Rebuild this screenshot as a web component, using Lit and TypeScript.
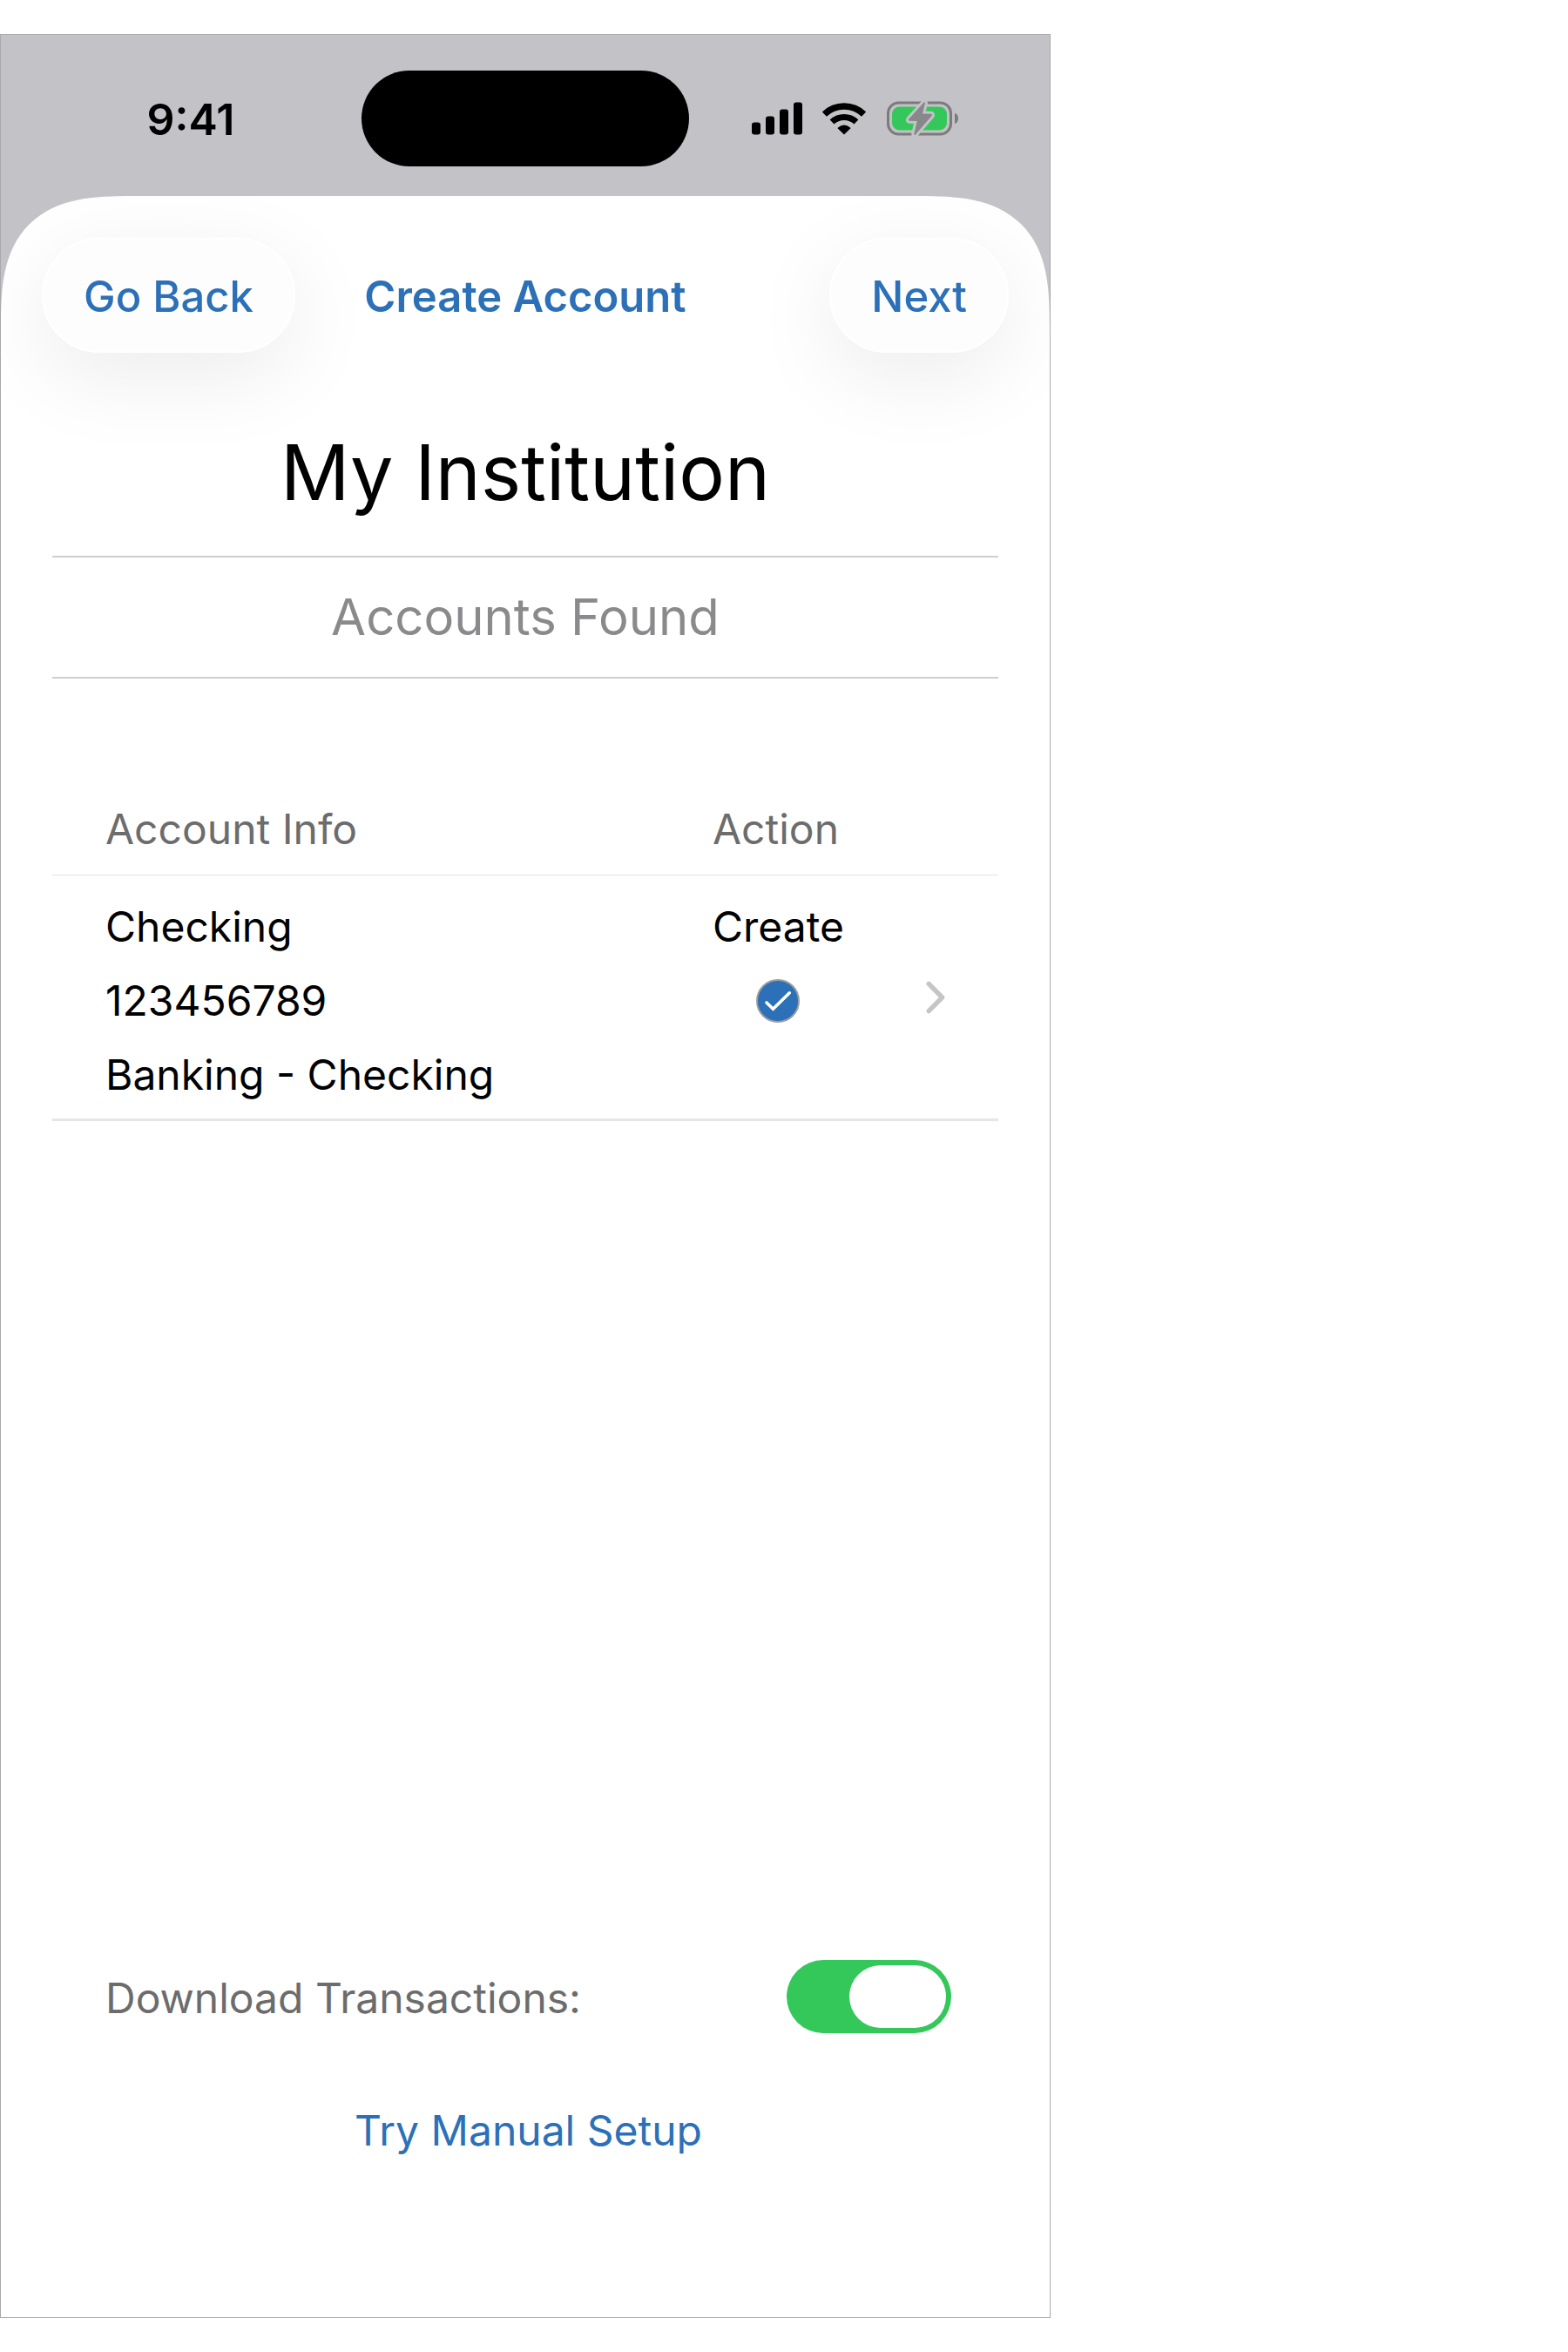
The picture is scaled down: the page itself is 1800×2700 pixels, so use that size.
import { LitElement, html, css } from "lit";
import { customElement, property, state } from "lit/decorators.js";

interface Account {
  name: string;
  number: string;
  kind: string;
  action: string;
  selected: boolean;
}

@customElement("status-bar")
class StatusBar extends LitElement {
  @property() time = "";

  static styles = css`
    :host {
      display: grid;
      grid-template-columns: 1fr minmax(0, 376px) 1fr;
      align-items: center;
      padding: 41px 0 34px;
      font-size: 50px;
      font-weight: 600;
      color: #000;
    }
    .time {
      text-align: center;
      padding: 2px 0 0 22px;
    }
    .island {
      height: 110px;
      border-radius: 55px;
      background: #000;
    }
    .icons {
      display: flex;
      align-items: center;
      justify-content: center;
      gap: 22px;
      padding-right: 32px;
    }
    svg {
      display: block;
      flex: none;
    }
  `;

  render() {
    return html`
      <span class="time">${this.time}</span>
      <span class="island"></span>
      <span class="icons">
        <svg width="58" height="38" viewBox="0 0 58 38" aria-hidden="true">
          <rect x="0" y="23.5" width="10" height="14" rx="3" />
          <rect x="16" y="16.5" width="10" height="21" rx="3" />
          <rect x="32" y="8.5" width="10" height="29" rx="3" />
          <rect x="48" y="0.5" width="10" height="37" rx="3" />
        </svg>
        <svg width="52" height="38" viewBox="0 0 52 38" aria-hidden="true">
          <path d="M3.4 14.1 A32.7 32.7 0 0 1 48.6 14.1" fill="none" stroke="#000" stroke-width="7.4" />
          <path d="M12.1 23 A20.3 20.3 0 0 1 39.9 23" fill="none" stroke="#000" stroke-width="7.2" />
          <path d="M26 37.6 L18.8 30.6 Q18.4 30 19 29.5 Q26 23.7 33 29.5 Q33.6 30 33.2 30.6 Z" />
        </svg>
        <svg width="84" height="40" viewBox="0 0 84 40" aria-hidden="true">
          <rect x="2.5" y="2" width="72" height="36" rx="12" fill="none" stroke="#7b7a7d" stroke-width="3" />
          <rect x="7" y="6.5" width="63" height="27" rx="8.5" fill="#34c85a" />
          <path d="M79 13.8 Q83 15.4 83 20 Q83 24.6 79 26.2 Z" fill="#7b7a7d" />
          <path
            d="M43.6 1.6 L26.4 20.6 Q25 22.6 27.4 22.7 L35.8 22.9 L32.2 38 Q32.4 39.6 34 38.4 L52.6 17 Q53.6 15 51.6 14.7 L42 14.4 L45 2.4 Q45 0.6 43.6 1.6 Z"
            fill="#88888b" stroke="#c3c2c7" stroke-width="6" stroke-linejoin="round" paint-order="stroke"
          />
        </svg>
      </span>
    `;
  }
}

@customElement("account-table")
class AccountTable extends LitElement {
  @property({ attribute: false }) accounts: Account[] = [];

  static styles = css`
    :host {
      display: block;
    }
    table {
      width: 100%;
      border-collapse: separate;
      border-spacing: 0;
      table-layout: fixed;
      line-height: 85px;
    }
    th,
    td {
      box-sizing: border-box;
      text-align: left;
      vertical-align: top;
      font-weight: 400;
    }
    th {
      width: 208px;
      padding: 2px 0 10px;
      color: #6c6c6c;
      border-bottom: 1px solid #e6e6e6;
    }
    td {
      padding: 16px 0 8px;
      border-bottom: 3px solid #e6e6e6;
    }
    .info {
      width: auto;
      padding-left: 61px;
    }
    .line {
      display: block;
    }
    .action {
      display: inline-grid;
      justify-items: center;
    }
    .check {
      display: grid;
      place-items: center;
      height: 85px;
    }
    .check > * {
      grid-area: 1 / 1;
    }
    .box {
      appearance: none;
      box-sizing: border-box;
      width: 50px;
      height: 50px;
      margin: 0;
      border: 2px solid #9a9da1;
      border-radius: 50%;
      background: #fff;
    }
    .box:checked {
      background: #2c70b8;
    }
    .tick {
      pointer-events: none;
    }
    .open {
      width: 120px;
      padding: 12px 61px 12px 0;
      vertical-align: middle;
    }
    .chevron {
      display: block;
      margin: 0 0 0 auto;
      padding: 0;
      border: 0;
      background: none;
      line-height: 0;
    }
  `;

  render() {
    return html`
      <table>
        <thead>
          <tr>
            <th class="info" scope="col">Account Info</th>
            <th scope="col">Action</th>
            <th class="open"></th>
          </tr>
        </thead>
        <tbody>
          ${this.accounts.map(
            (a) => html`
              <tr>
                <td class="info">
                  <span class="line">${a.name}</span>
                  <span class="line">${a.number}</span>
                  <span class="line">${a.kind}</span>
                </td>
                <td>
                  <label class="action">
                    <span>${a.action}</span>
                    <span class="check">
                      <input class="box" type="checkbox" .checked=${a.selected} />
                      <svg class="tick" width="50" height="50" viewBox="0 0 50 50" aria-hidden="true">
                        <path d="M12 27 L19.5 34.2 L38.3 15.8" fill="none" stroke="#fff" stroke-width="3.6" stroke-linecap="round" />
                      </svg>
                    </span>
                  </label>
                </td>
                <td class="open">
                  <button class="chevron" aria-label="Open ${a.name}">
                    <svg width="22" height="38" viewBox="0 0 22 38" aria-hidden="true">
                      <path d="M3.2 3.4 L18.6 19 L3.2 34.6" fill="none" stroke="#c5c5c7" stroke-width="5.4" stroke-linecap="round" stroke-linejoin="round" />
                    </svg>
                  </button>
                </td>
              </tr>
            `
          )}
        </tbody>
      </table>
    `;
  }
}

@customElement("app-root")
class AppRoot extends LitElement {
  @state() private accounts: Account[] = [
    { name: "Checking", number: "123456789", kind: "Banking - Checking", action: "Create", selected: true },
  ];
  @state() private download = true;

  static styles = css`
    :host {
      display: flex;
      flex-direction: column;
      box-sizing: border-box;
      min-height: 100vh;
      padding: 39px 0;
      background: #fff;
      color: #000;
      font-family: Inter, "Liberation Sans", sans-serif;
      font-size: 48px;
    }
    .phone {
      flex: 1;
      display: flex;
      flex-direction: column;
      box-sizing: border-box;
      width: 100%;
      max-width: 1206px;
      border: 1px solid #a9a9ab;
      background: #c3c2c7;
    }
    .sheet {
      flex: 1;
      display: flex;
      flex-direction: column;
      overflow: hidden;
      background: #fff;
      border-radius: 112px 112px 0 0;
    }
    @supports (corner-shape: superellipse(1.5)) {
      .sheet {
        border-radius: 150px 150px 0 0;
        corner-shape: superellipse(1.5) superellipse(1.5) round round;
      }
    }
    .nav {
      display: grid;
      grid-template-columns: 1fr auto 1fr;
      align-items: center;
      padding: 48px 47px 0;
      font-size: 49px;
    }
    button {
      font: inherit;
      color: #2c70b8;
      border: 0;
      background: none;
    }
    .pill {
      justify-self: start;
      height: 132px;
      padding: 2px 46px 0;
      border: 2px solid #fff;
      border-radius: 66px;
      background: #fdfdfd;
      box-shadow: 0 26px 100px rgba(0, 0, 0, 0.08);
      font-weight: 500;
    }
    .next {
      justify-self: end;
    }
    .title {
      margin: 0;
      padding-top: 2px;
      font-size: 49px;
      font-weight: 600;
      color: #2c70b8;
    }
    .body {
      padding: 81px 59px 0;
    }
    .name {
      margin: 0;
      padding-bottom: 40px;
      font-size: 88px;
      line-height: 112px;
      font-weight: 400;
      text-align: center;
      border-bottom: 2px solid #cfcfd1;
    }
    .found {
      margin: 0 0 128px;
      font-size: 58px;
      line-height: 137px;
      font-weight: 400;
      color: #8a8a8d;
      text-align: center;
      border-bottom: 2px solid #cfcfd1;
    }
    .footer {
      margin-top: auto;
      padding: 0 113px 172px 120px;
      display: flex;
      flex-direction: column;
      gap: 65px;
    }
    .row {
      display: flex;
      justify-content: space-between;
      line-height: 88px;
      color: #6c6c6c;
    }
    .switch {
      appearance: none;
      flex: none;
      box-sizing: border-box;
      display: flex;
      width: 189px;
      height: 84px;
      margin: 0;
      padding: 6px;
      border-radius: 42px;
      background: #d5d5d8;
    }
    .switch:checked {
      justify-content: flex-end;
      background: #34c85a;
    }
    .switch::before {
      content: "";
      width: 111px;
      border-radius: 36px;
      background: #fff;
    }
    .manual {
      align-self: center;
      padding: 0;
      line-height: 85px;
    }
  `;

  render() {
    return html`
      <main class="phone">
        <status-bar time="9:41"></status-bar>
        <section class="sheet">
          <header class="nav">
            <button class="pill">Go Back</button>
            <h1 class="title">Create Account</h1>
            <button class="pill next">Next</button>
          </header>
          <div class="body">
            <h2 class="name">My Institution</h2>
            <h3 class="found">Accounts Found</h3>
            <account-table .accounts=${this.accounts}></account-table>
          </div>
          <footer class="footer">
            <div class="row">
              <label for="download">Download Transactions:</label>
              <input
                class="switch"
                id="download"
                type="checkbox"
                role="switch"
                .checked=${this.download}
                @change=${(e: Event) => (this.download = (e.target as HTMLInputElement).checked)}
              />
            </div>
            <button class="manual">Try Manual Setup</button>
          </footer>
        </section>
      </main>
    `;
  }
}
